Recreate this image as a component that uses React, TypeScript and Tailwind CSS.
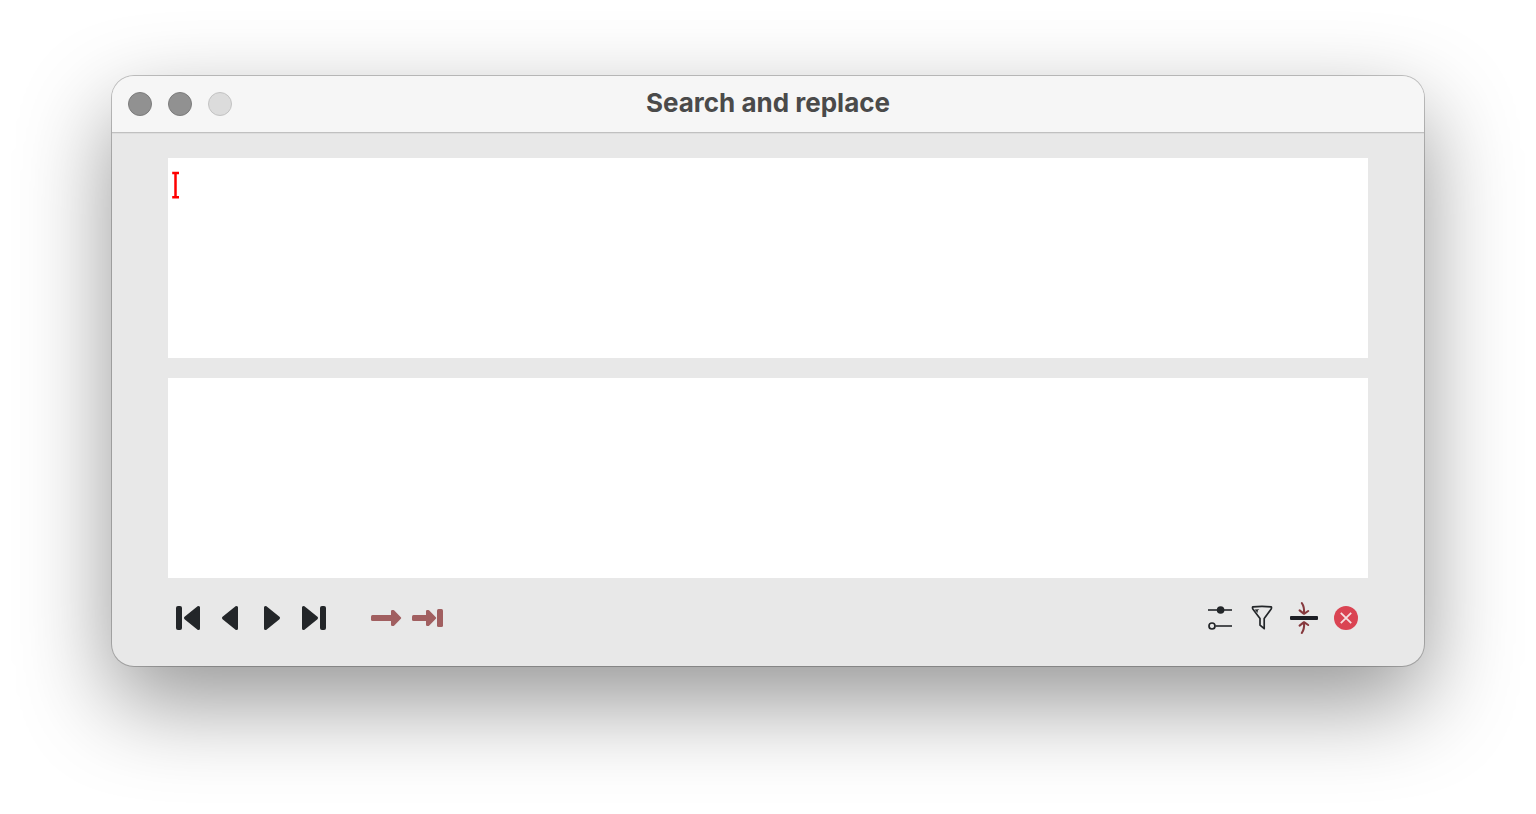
import type { ReactNode } from "react";

function ToolButton({ label, children }: { label: string; children: ReactNode }) {
  return (
    <button type="button" aria-label={label} className="size-10 rounded">
      <svg viewBox="0 0 40 40" className="size-10" fill="none" aria-hidden="true">
        {children}
      </svg>
    </button>
  );
}

function Editor({ label, children }: { label: string; children?: ReactNode }) {
  return (
    <div className="relative h-[200px]">
      <textarea
        aria-label={label}
        className="block size-full resize-none bg-white p-3 font-['Liberation_Mono',monospace] text-2xl outline-none"
      />
      {children}
    </div>
  );
}

export default function App() {
  return (
    <div className="min-h-screen overflow-hidden bg-white px-28 py-19 font-['Inter',sans-serif]">
      <main className="rounded-[22px] bg-[#e8e8e8] shadow-[0_0_0_1px_rgba(0,0,0,0.22),0_36px_92px_rgba(0,0,0,0.42)]">
        <header className="grid h-[57px] grid-cols-[1fr_auto_1fr] items-center rounded-t-[22px] border-b border-[#c0c0c0] bg-[#f6f6f6] px-4 shadow-[0_1px_0_#dddddd]">
          <div className="flex gap-4">
            <button type="button" aria-label="Close window" className="size-6 rounded-full border border-[#7c7c7c] bg-[#919191]" />
            <button type="button" aria-label="Minimize window" className="size-6 rounded-full border border-[#7c7c7c] bg-[#919191]" />
            <button type="button" aria-label="Zoom window" disabled className="size-6 rounded-full border border-[#c3c3c3] bg-[#dcdcdc]" />
          </div>
          <h1 className="pb-0.5 text-[26px] leading-8 font-bold text-[#4a4a4a]">Search and replace</h1>
        </header>

        <div className="flex flex-col gap-5 px-14 pt-[25px] pb-7">
          <Editor label="Search for">
            <svg viewBox="0 0 8 28" className="pointer-events-none absolute top-[13px] left-1 h-7 w-2" fill="none" aria-hidden="true">
              <path d="M0.2 2H7M0.2 26.2H7M3.5 2V26.2" stroke="#ff0000" strokeWidth="2.5" />
            </svg>
          </Editor>
          <Editor label="Replace with" />

          <div className="flex items-center justify-between pr-0.5">
            <div className="flex gap-8">
              <div className="flex gap-0.5">
                <ToolButton label="First match">
                  <rect x="8" y="8" width="6" height="24" rx="2" fill="#232629" />
                  <path d="M30.5 9.5V30.5L17.5 20Z" fill="#232629" stroke="#232629" strokeWidth="3" strokeLinejoin="round" />
                </ToolButton>
                <ToolButton label="Previous match">
                  <path d="M26.5 9.5V30.5L13.5 20Z" fill="#232629" stroke="#232629" strokeWidth="3" strokeLinejoin="round" />
                </ToolButton>
                <ToolButton label="Next match">
                  <path d="M13.5 9.5V30.5L26.5 20Z" fill="#232629" stroke="#232629" strokeWidth="3" strokeLinejoin="round" />
                </ToolButton>
                <ToolButton label="Last match">
                  <path d="M9.5 9.5V30.5L22.5 20Z" fill="#232629" stroke="#232629" strokeWidth="3" strokeLinejoin="round" />
                  <rect x="26" y="8" width="6" height="24" rx="2" fill="#232629" />
                </ToolButton>
              </div>
              <div className="flex gap-0.5">
                <ToolButton label="Replace">
                  <rect x="5" y="17" width="22" height="6" rx="1.5" fill="#a15f60" />
                  <path d="M26.2 13.2V26.8H27.2L34 20L27.2 13.2Z" fill="#a15f60" stroke="#a15f60" strokeWidth="2.4" strokeLinejoin="round" />
                </ToolButton>
                <ToolButton label="Replace all">
                  <rect x="4" y="17" width="16" height="6" rx="1.5" fill="#a15f60" />
                  <path d="M19.2 13.2V26.8H20.2L27 20L20.2 13.2Z" fill="#a15f60" stroke="#a15f60" strokeWidth="2.4" strokeLinejoin="round" />
                  <rect x="29" y="11" width="6" height="18" rx="1.5" fill="#a15f60" />
                </ToolButton>
              </div>
            </div>

            <div className="flex gap-0.5">
              <ToolButton label="Options">
                <path d="M8 12H32M15.5 28H32" stroke="#4c4e51" strokeWidth="2" />
                <circle cx="20.6" cy="12" r="3.8" fill="#232629" />
                <circle cx="12" cy="28" r="3" stroke="#232629" strokeWidth="1.7" />
              </ToolButton>
              <ToolButton label="Filter">
                <path d="M10.7 8.9Q20 8 29.3 8.9Q29.8 10 29 11.2L22.2 20.5V30.7L18 27.2V20.5L11 11.2Q10.2 10 10.7 8.9Z" stroke="#232629" strokeWidth="1.7" strokeLinejoin="round" />
                <path d="M12.6 11.4L17.4 11.2L15.8 12.6L15.6 15Z" fill="#232629" />
              </ToolButton>
              <ToolButton label="Collapse">
                <rect x="6" y="18" width="28" height="4" rx="1" fill="#1c1e24" />
                <path d="M17.8 5Q20.6 9 20 15.4M15.6 12.4L20 15.8L24.2 13M17.8 35Q20.6 31 20 24.6M15.6 27.6L20 24.2L24.2 27" stroke="#86393e" strokeWidth="2.1" strokeLinecap="round" strokeLinejoin="round" />
              </ToolButton>
              <ToolButton label="Close">
                <circle cx="20" cy="20" r="12" fill="#da4453" />
                <path d="M14.8 14.8L25.2 25.2M25.2 14.8L14.8 25.2" stroke="#f5dfe1" strokeWidth="1.8" />
              </ToolButton>
            </div>
          </div>
        </div>
      </main>
    </div>
  );
}
